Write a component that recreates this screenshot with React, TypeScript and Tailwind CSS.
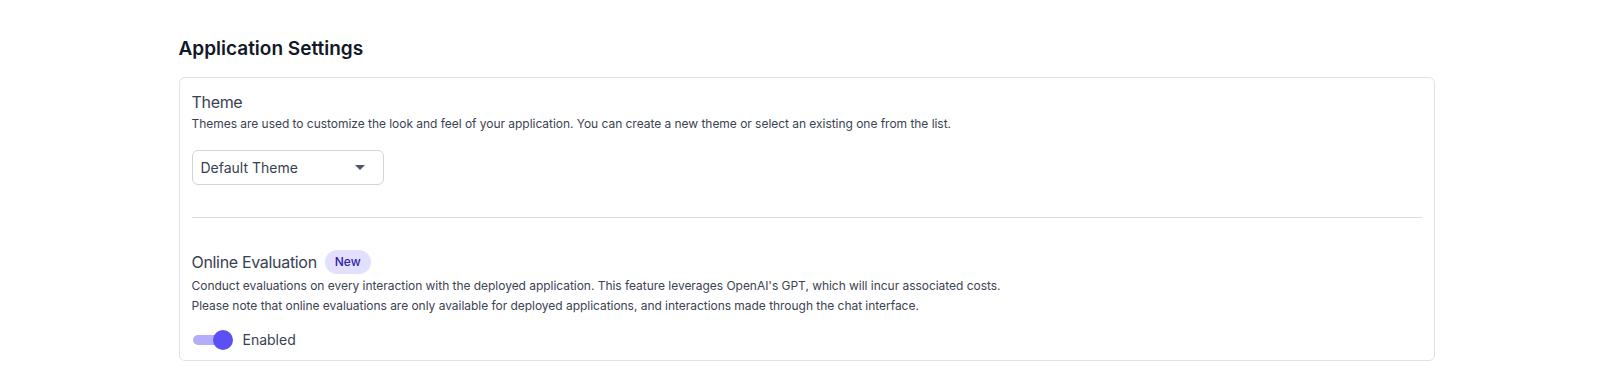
import React from "react";

export default function App() {
  return (
    <div className="min-h-[386px] w-full bg-white" style={{ fontFamily: "Inter, 'Noto Sans', sans-serif" }}>
      <div className="mx-auto w-[1256px] pt-[35px]">
        <h2 className="text-[19px] leading-7 font-semibold text-[#111827]">Application Settings</h2>
        <div className="mt-[14px] rounded-md border border-[#dde3ec] px-3 pt-3 pb-[10px]">
          <div className="text-base leading-6 tracking-[-0.02em] text-[#374151]">Theme</div>
          <p className="text-xs leading-5 tracking-[-0.003em] text-[#3b4352]">
            Themes are used to customize the look and feel of your application. You can create a new theme or select an existing one from the list.
          </p>
          <div className="mt-4 flex h-[35px] w-[192px] items-center justify-between rounded-md border border-[#d1d5db] pl-2 pr-[18px] text-sm text-[#374151]">
            <span>Default Theme</span>
            <svg width="10" height="5" viewBox="0 0 10 5" className="text-[#4b5563]">
              <path d="M0 0 L10 0 L5 5 Z" fill="currentColor" />
            </svg>
          </div>
          <div className="my-8 h-px bg-[#d8dde6]" />
          <div className="flex h-6 items-center">
            <span className="text-base leading-6 tracking-[-0.02em] text-[#374151]">Online Evaluation</span>
            <span className="ml-2 inline-flex h-6 items-center rounded-full bg-[#e3e0fd] px-2.5 text-xs font-medium text-[#2e22a8]">New</span>
          </div>
          <p className="mt-0.5 text-xs leading-5 tracking-[-0.003em] text-[#3b4352]">
            Conduct evaluations on every interaction with the deployed application. This feature leverages OpenAI's GPT, which will incur associated costs.
            <br />
            Please note that online evaluations are only available for deployed applications, and interactions made through the chat interface.
          </p>
          <div className="mt-[14px] flex h-5 items-center">
            <div className="relative h-5 w-[41px]">
              <div className="absolute left-[1px] top-[5px] h-[10px] w-[34px] rounded-full bg-[#b4aefa]" />
              <div className="absolute right-0 top-0 h-5 w-5 rounded-full bg-[#5b4ff5]" />
            </div>
            <span className="ml-[10px] text-sm text-[#374151]">Enabled</span>
          </div>
        </div>
      </div>
    </div>
  );
}
